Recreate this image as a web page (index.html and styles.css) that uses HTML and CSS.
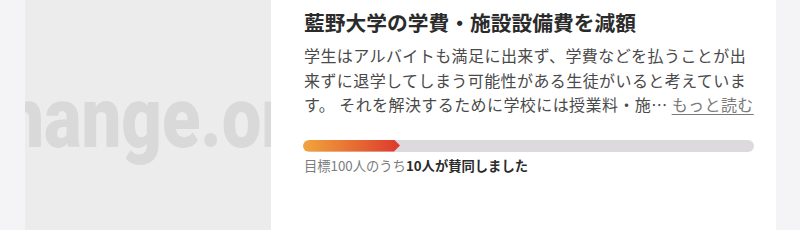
FILE: index.html
```html
<!DOCTYPE html>
<html lang="ja">
<head>
<meta charset="utf-8">
<link rel="stylesheet" href="styles.css">
</head>
<body>
<div class="page">
  <div class="card">
    <div class="thumb">
      <span class="watermark">change.org</span>
    </div>
    <div class="content">
      <h2 class="title">藍野大学の学費・施設設備費を減額</h2>
      <p class="desc">学生はアルバイトも満足に出来ず、学費などを払うことが出来ずに退学してしまう可能性がある生徒がいると考えています。 それを解決するために学校には授業料・施… <a class="more" href="#">もっと読む</a></p>
      <div class="track"><div class="fill" style="width:97px"></div></div>
      <p class="count">目標100人のうち<strong>10人が賛同しました</strong></p>
    </div>
  </div>
</div>
</body>
</html>
```

FILE: styles.css
```css
html, body {
  margin: 0;
  padding: 0;
  background: #f4f3f5;
}
body {
  font-family: "Noto Sans CJK JP", "Noto Sans", sans-serif;
}
.page {
  width: 800px;
  height: 230px;
  padding: 0 24px 0 25px;
  box-sizing: border-box;
  overflow: hidden;
}
.card {
  display: flex;
  height: 230px;
  background: #ffffff;
}
.thumb {
  width: 246px;
  flex: none;
  background: #ececec;
  overflow: hidden;
  display: flex;
  align-items: center;
  justify-content: center;
}
.watermark {
  font-family: Roboto, "DejaVu Sans", sans-serif;
  font-weight: 900;
  font-size: 86px;
  color: #d9d9d9;
  white-space: nowrap;
  transform: scaleX(0.82);
  line-height: 1;
  margin-top: 6px;
}
.content {
  flex: 1;
  padding: 7px 22px 0 33px;
  min-width: 0;
}
.title {
  margin: 0;
  font-size: 20.75px;
  line-height: 30px;
  font-weight: 700;
  color: #2b2b2b;
  white-space: nowrap;
}
.desc {
  margin: 6px 0 0;
  font-size: 16px;
  letter-spacing: 0.42px;
  line-height: 24.5px;
  color: #4a4a4a;
}
.more {
  color: #7a7a7a;
  text-decoration: underline;
  text-underline-offset: 3px;
}
.track {
  margin: 23px 0 0 -1px;
  height: 12px;
  border-radius: 6px;
  background: #dcdadd;
  overflow: hidden;
}
.fill {
  height: 12px;
  background: linear-gradient(90deg, #f2a53b, #dc3a2c);
  border-radius: 6px 0 0 6px;
  clip-path: polygon(0 0, calc(100% - 6px) 0, 100% 50%, calc(100% - 6px) 100%, 0 100%);
}
.count {
  margin: 4px 0 0;
  font-size: 13.3px;
  line-height: 20px;
  color: #7c7c7c;
}
.count strong {
  color: #2b2b2b;
  font-weight: 700;
}
```
